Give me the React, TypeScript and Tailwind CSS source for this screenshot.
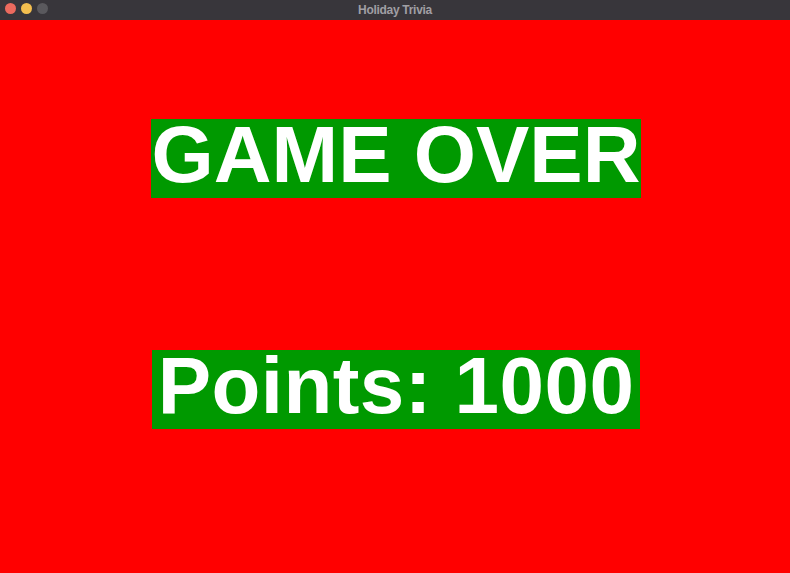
import React from "react";

const TitleBar: React.FC<{ title: string }> = ({ title }) => (
  <div className="relative flex h-5 items-center justify-center bg-[#38363b]">
    <div className="absolute left-[5px] top-[3px] flex gap-[5px]">
      <span className="h-[11px] w-[11px] rounded-full bg-[#ec6a5e]" />
      <span className="h-[11px] w-[11px] rounded-full bg-[#f4bf4f]" />
      <span className="h-[11px] w-[11px] rounded-full bg-[#5a595d]" />
    </div>
    <span className="font-['Liberation_Sans',Arial,sans-serif] text-[12px] font-bold tracking-[-0.3px] text-[#a09fa4]">
      {title}
    </span>
  </div>
);

const Banner: React.FC<{ text: string; className: string }> = ({ text, className }) => (
  <div
    className={`${className} h-[79px] bg-[#009900] pb-[7px] text-center font-['Liberation_Sans',Arial,sans-serif] text-[80px] font-bold leading-[72px] text-white whitespace-nowrap`}
  >
    {text}
  </div>
);

const App: React.FC = () => {
  const points = 1000;

  return (
    <div className="flex h-[573px] w-[790px] flex-col overflow-hidden">
      <TitleBar title="Holiday Trivia" />
      <div className="flex flex-1 flex-col items-center bg-[#ff0000] pt-[99px] pl-[2px]">
        <Banner text="GAME OVER" className="w-[490px]" />
        <div className="mt-[152px]">
          <Banner text={`Points: ${points}`} className="w-[488px] tracking-[0.45px]" />
        </div>
      </div>
    </div>
  );
};

export default App;
